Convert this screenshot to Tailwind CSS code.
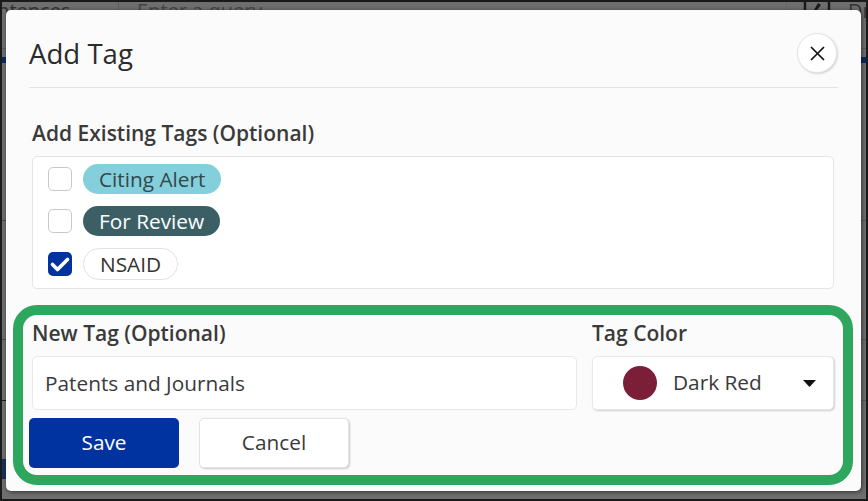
<!DOCTYPE html>
<html lang="en">
<head>
  <meta charset="UTF-8" />
  <title>Add Tag</title>
  <script src="https://cdn.jsdelivr.net/npm/@tailwindcss/browser@4"></script>
</head>
<body class="w-[868px] h-[501px] overflow-hidden font-['Open_Sans',sans-serif]">
  <div class="relative w-[868px] h-[501px] overflow-hidden bg-[#6e6e6e] border-2 border-[#1a1a1a]">

    <!-- page behind the overlay -->
    <div class="absolute left-[-27px] top-[-3px] text-[20px] leading-[24px] text-[#333]">Sentences</div>
    <div class="absolute left-[135px] top-[-3px] text-[20px] leading-[24px] text-[#444]">Enter a query</div>
    <div class="absolute left-[116px] top-0 w-px h-[8px] bg-[#5c5c5c]"></div>
    <div class="absolute left-[784px] top-0 w-px h-[8px] bg-[#666]"></div>
    <div class="absolute left-[846px] top-[-3px] text-[20px] leading-[24px] text-[#333]">Dr</div>
    <svg class="absolute left-[801px] top-0" width="28" height="8" viewBox="0 0 28 8" fill="none"><path d="M2 0v8M26 0v8" stroke="#1a1a1a" stroke-width="2.5"/><path d="M11 8l4-7 3 2-4 5z" fill="#1a1a1a"/></svg>
    <div class="absolute left-0 top-[55px] w-[6px] h-[6px] bg-[#0a2a66]"></div>
    <div class="absolute left-[859px] top-[55px] w-[7px] h-[6px] bg-[#0a2a66]"></div>
    <div class="absolute left-0 top-[46px] w-[6px] h-px bg-[#5c5c5c]"></div>
    <div class="absolute left-[859px] top-[46px] w-[7px] h-px bg-[#5c5c5c]"></div>
    <div class="absolute left-0 top-[218px] w-[6px] h-px bg-[#4c4c4c]"></div>
    <div class="absolute left-0 top-[337px] w-[6px] h-px bg-[#4c4c4c]"></div>
    <div class="absolute left-0 top-[398px] w-[6px] h-px bg-[#1a1a1a]"></div>
    <div class="absolute left-0 top-[457px] w-[4px] h-[20px] bg-[#16325c]"></div>
    <div class="absolute left-[859px] top-[218px] w-[7px] h-px bg-[#5c5c5c]"></div>
    <div class="absolute left-[859px] top-[337px] w-[7px] h-px bg-[#5c5c5c]"></div>
    <div class="absolute left-[859px] top-[398px] w-[7px] h-px bg-[#5c5c5c]"></div>
    <div class="absolute left-[16px] top-[494px] text-[17px] leading-[20px] text-[#222]">Saved on January 10, 2020 1:18 PM</div>

    <!-- modal -->
    <div class="absolute left-[4px] top-[8px] w-[855px] h-[481px] bg-[#fbfbfb] rounded-[5px] shadow-[1px_1px_4px_rgba(0,0,0,0.55)] flex flex-col">
      <header class="mx-[23px] h-[78px] border-b border-[#e2e2e2] flex items-center justify-between">
        <h1 class="text-[27.6px] leading-[36px] text-[#2b2b2b] mt-[9px]">Add Tag</h1>
        <button class="w-[40px] h-[40px] mt-[9px] mr-px rounded-full bg-white border border-[#e4e4e4] shadow-[1px_1px_2px_rgba(0,0,0,0.15)] flex items-center justify-center">
          <svg width="15" height="15" viewBox="0 0 15 15" fill="none"><path d="M1 1l13 13M14 1L1 14" stroke="#111" stroke-width="1.7"/></svg>
        </button>
      </header>

      <section class="ml-[26px] mr-[27px] mt-[32px]">
        <h2 class="text-[21px] leading-[27px] font-semibold text-[#3a3a3a]">Add Existing Tags (Optional)</h2>
        <div class="mt-[9px] h-[133px] bg-white border border-[#e4e4e4] rounded-[5px] pl-[15px] pt-[7px] flex flex-col gap-[12px]">
          <div class="flex items-center gap-[11px] h-[30px]">
            <span class="w-[24px] h-[24px] bg-white border border-[#c8c8c8] rounded-[5px]"></span>
            <span class="h-[30px] px-[16px] rounded-full bg-[#83d0dc] text-[20.8px] leading-[30px] text-[#33474c]">Citing Alert</span>
          </div>
          <div class="flex items-center gap-[11px] h-[30px]">
            <span class="w-[24px] h-[24px] bg-white border border-[#c8c8c8] rounded-[5px]"></span>
            <span class="h-[30px] px-[16px] rounded-full bg-[#3b5f65] text-[20.8px] leading-[30px] text-white">For Review</span>
          </div>
          <div class="flex items-center gap-[11px] h-[32px]">
            <span class="w-[24px] h-[24px] bg-[#0033a0] rounded-[5px] flex items-center justify-center">
              <svg width="24" height="24" viewBox="0 0 24 24" fill="none"><path d="M4.500 12.500l5 5 10-10" stroke="#fff" stroke-width="3.6" stroke-linecap="round" stroke-linejoin="round"/></svg>
            </span>
            <span class="h-[32px] px-[16px] rounded-full bg-white border border-[#e2e2e2] text-[20.8px] leading-[30px] text-[#333]">NSAID</span>
          </div>
        </div>
      </section>

      <!-- highlighted new tag area -->
      <section class="absolute left-[7px] top-[295px] w-[840px] h-[180px] border-[10px] border-[#2ea65d] rounded-[24px] pl-[9px] pr-[8px] pt-[5px]">
        <div class="flex gap-[15px]">
          <div class="w-[545px]">
            <label class="block text-[21px] leading-[27px] font-semibold text-[#3a3a3a]">New Tag (Optional)</label>
            <input value="Patents and Journals" class="mt-[9px] w-full h-[54px] px-[12px] bg-white border border-[#e8e8e8] rounded-[5px] text-[20.8px] text-[#3a3a3a] outline-none font-['Open_Sans',sans-serif]" />
          </div>
          <div class="w-[242px]">
            <label class="block text-[21px] leading-[27px] font-semibold text-[#3a3a3a]">Tag Color</label>
            <div class="mt-[9px] h-[54px] bg-white border border-[#e8e8e8] rounded-[5px] shadow-[1px_1px_2px_rgba(0,0,0,0.18)] flex items-center pl-[30px] pr-[17px]">
              <span class="w-[34px] h-[34px] rounded-full bg-[#7b1f38]"></span>
              <span class="ml-[16px] text-[20.8px] text-[#3a3a3a]">Dark Red</span>
              <svg class="ml-auto" width="13" height="7" viewBox="0 0 13 7"><path d="M0 0h13L6.500 7z" fill="#111"/></svg>
            </div>
          </div>
        </div>
        <div class="flex gap-[20px] -ml-[3px] mt-[8px]">
          <button class="w-[150px] h-[50px] bg-[#0033a0] rounded-[5px] text-[20.8px] font-medium text-white">Save</button>
          <button class="w-[150px] h-[50px] bg-white border border-[#e4e4e4] rounded-[5px] shadow-[1px_1px_2px_rgba(0,0,0,0.2)] text-[20.8px] text-[#3a3a3a]">Cancel</button>
        </div>
      </section>
    </div>
  </div>
</body>
</html>
